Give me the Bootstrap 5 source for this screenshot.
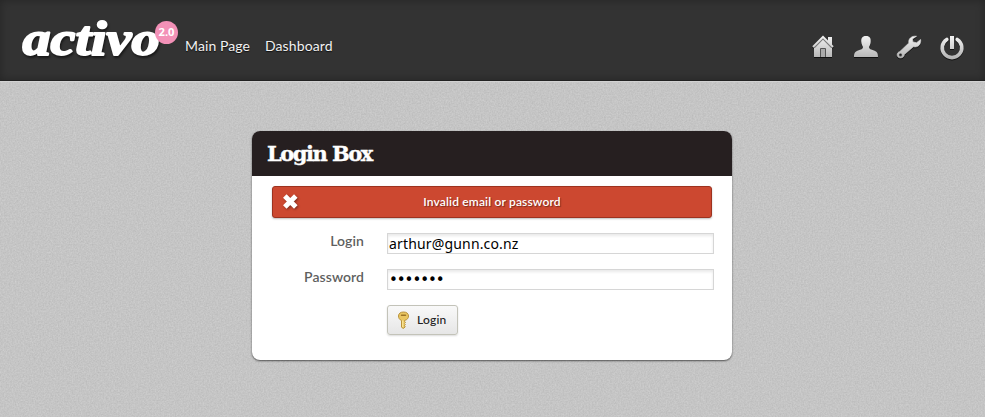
<!DOCTYPE html>
<html lang="en">
<head>
<meta charset="utf-8">
<title>Activo - Login</title>
<meta name="viewport" content="width=device-width, initial-scale=1">
<link href="https://cdn.jsdelivr.net/npm/bootstrap@5.3.0/dist/css/bootstrap.min.css" rel="stylesheet">
<style>
body{height:417px;overflow:hidden;background:#c4c4c4;font-family:Lato,"Open Sans",sans-serif;font-size:14px}
.grain{position:absolute;inset:0;width:100%;height:100%;z-index:-1}
.topbar{height:81px;background:#333;box-shadow:inset 0 0 10px rgba(0,0,0,.28);border-bottom:1px solid #222}
.edge{height:1px;background:#d2d2d2}
.logo{width:163px;height:60px;margin:8px 0 0 17px;flex:none}
.logo .word{font:italic bold 49px "Liberation Serif",serif;fill:#fff;stroke:#fff;stroke-width:2px;stroke-linejoin:round;filter:drop-shadow(1px 2px 1px rgba(0,0,0,.55))}
.logo .ver{font:bold 10px "Open Sans",sans-serif;fill:#fff}
.topnav{margin:36px 0 0 5px;gap:15px}
.topnav .nav-link{padding:0;color:#f2f2f2;line-height:19px;font-size:14px;letter-spacing:.1px;white-space:nowrap;text-shadow:0 1px 1px #111}
.topnav .first{width:65px}
.tools{margin:34px 19px 0 0}
.tools svg{display:block;filter:drop-shadow(0 1px 0 #111)}
.login-box{width:480px;height:229px;margin:49px 0 0 252px;border:0;border-radius:8px;box-shadow:0 1px 2px rgba(0,0,0,.6);background:#fff}
.login-box .card-header{height:45px;padding:0 0 0 15px;background:#261f20;border:0;border-radius:8px 8px 0 0}
.login-box h1{margin:0;font:bold 21px/45px "DejaVu Serif",serif;letter-spacing:-1.5px;color:#fff;-webkit-text-stroke:.4px #fff;white-space:nowrap}
.login-box .card-body{padding:10px 18px 0 20px}
.error-bar{width:440px;height:32px;margin:0 0 15px;padding:0;background:#cc4830;border:1px solid #9d321f;border-radius:3px;color:#fff;font:600 12px/30px Lato,sans-serif;letter-spacing:.16px;text-shadow:1px 1px 1px rgba(0,0,0,.4);box-shadow:0 1px 2px rgba(0,0,0,.25);position:relative}
.error-bar svg{position:absolute;left:9px;top:6px;filter:drop-shadow(1px 1px 1px rgba(0,0,0,.4))}
.field{height:21px;margin-bottom:15px}
.field label{width:92px;margin-right:23px;text-align:right;color:#5f5f5f;font-weight:600;font-size:14px;letter-spacing:.07px;line-height:16px}
.field .form-control{width:327px;height:21px;padding:0 1px;border:1px solid #d6d6d6;border-radius:0;background:#fff;box-shadow:inset 0 2px 3px rgba(0,0,0,.09);font:14px/19px "Noto Sans",sans-serif;color:#000}
.field .mail{letter-spacing:.16px}
.field .secret{font:15px/19px "DejaVu Sans",sans-serif;letter-spacing:-1.05px;padding-top:1px}
.btn-login{width:71px;height:30px;margin-left:115px;padding:0 0 0 9px;border:1px solid #c3c3b9;border-radius:3px;background:linear-gradient(#f9f9f9,#e6e6e6);box-shadow:0 1px 2px rgba(0,0,0,.14);color:#222;font-size:12px;font-weight:500;letter-spacing:.2px}
.btn-login svg{margin-right:7px}
</style>
</head>
<body class="position-relative">
<svg class="grain" aria-hidden="true">
<defs>
<filter id="noise" x="0" y="0" width="100%" height="100%" color-interpolation-filters="sRGB"><feTurbulence type="fractalNoise" baseFrequency=".65" numOctaves="3" seed="4"/><feColorMatrix values=".1 0 0 0 .722  .1 0 0 0 .722  .1 0 0 0 .722  0 0 0 0 1"/></filter>
</defs>
<rect width="100%" height="100%" filter="url(#noise)"/>
</svg>
<header class="topbar d-flex align-items-start">
<svg class="logo" viewBox="0 0 163 60" role="img" aria-label="activo 2.0">
<text class="word" x="5.500" y="47" textLength="137" lengthAdjust="spacingAndGlyphs">activo</text>
<circle cx="149.5" cy="24.5" r="11.5" fill="#f391b7"/>
<text class="ver" x="149.5" y="28" text-anchor="middle" textLength="16" lengthAdjust="spacingAndGlyphs">2.0</text>
</svg>
<nav class="topnav nav flex-nowrap">
<a class="nav-link first" href="#">Main Page</a>
<a class="nav-link" href="#">Dashboard</a>
</nav>
<div class="tools d-flex ms-auto">
<svg width="154" height="27" viewBox="0 0 154 27" aria-hidden="true">
<defs><linearGradient id="metal" gradientUnits="userSpaceOnUse" x1="0" y1="2" x2="0" y2="25"><stop stop-color="#f3f3f3"/><stop offset="1" stop-color="#b2b2b2"/></linearGradient></defs>
<g fill="url(#metal)">
<path d="M16 8V3h4v9z"/>
<path d="M2 14 11 5 20 14v9H2z"/>
<path d="M1 13 11 3l10 10" fill="none" stroke="url(#metal)" stroke-width="2"/>
<path d="M2.500 14 11 5.300 19.500 14" fill="none" stroke="#777" stroke-width=".8"/>
<path d="M8.500 23v-8.500h5V23" fill="#aaa" stroke="#555"/>
<path d="M54 2c4 0 5 2.500 4.700 6-.2 2.500-1.200 4-1.700 5 0 2 2 2.500 5 3.500 3 1 4 2.500 4 6.500H42c0-4 1-5.500 4-6.500 3-1 5-1.500 5-3.500-.5-1-1.500-2.500-1.700-5C49 4.500 50 2 54 2z"/>
<path fill-rule="evenodd" d="M104.500 2.300c-5-.8-8.500 2.700-7.700 6.700l-9 8.600c-3.800.9-3.600 6.400.7 6.400 2.500 0 3.700-1.700 3.900-3.500l9-7.700c5 1 7.900-2.800 7.200-7.300l-4 3.200-3.700-.7-.5-3zM88.500 19.300a1.700 1.700 0 1 1-.01 3.400 1.700 1.700 0 0 1 .01-3.400z" stroke="url(#metal)" stroke-width=".6"/>
<path d="M138 2h4v13h-4z"/>
<path d="M134.800 5.500a9.800 9.800 0 1 0 10.400 0" fill="none" stroke="url(#metal)" stroke-width="3.600" stroke-linecap="round"/>
</g>
</svg>
</div>
</header>
<div class="edge"></div>
<main class="login-box card">
<div class="card-header"><h1>Login Box</h1></div>
<div class="card-body">
<div class="error-bar alert text-center" role="alert">
<svg width="18" height="18" viewBox="0 0 18 18" aria-hidden="true"><path d="M2.800 3l11 11M13.800 3l-11 11" stroke="#fff" stroke-width="5"/></svg>
Invalid email or password
</div>
<form>
<div class="field d-flex"><label for="login">Login</label><input id="login" class="form-control mail" type="text" value="arthur@gunn.co.nz"></div>
<div class="field d-flex"><label for="password">Password</label><input id="password" class="form-control secret" type="password" value="1234567"></div>
<button type="button" class="btn btn-login d-flex align-items-center">
<svg width="13" height="18" viewBox="0 0 13 18" aria-hidden="true"><path d="M4.500 9.500v6.700l1.800 1.300 2-1.700-1-1 1-1.300-1-1 1.200-1.200-1-.8V9.500c3-.8 4-2.500 4-4.500C11.500 2.500 9.500 1 6.500 1S1.500 2.500 1.500 5c0 2 1 3.700 3 4.500z" fill="#eac661" stroke="#b8923c"/><path d="M4.500 4.200h4" stroke="#9c7427" stroke-width="1.500" stroke-linecap="round"/><path d="M5.800 9.500V16" stroke="#fff0a8"/></svg>Login</button>
</form>
</div>
</main>
<script src="https://cdn.jsdelivr.net/npm/bootstrap@5.3.0/dist/js/bootstrap.bundle.min.js"></script>
</body>
</html>
